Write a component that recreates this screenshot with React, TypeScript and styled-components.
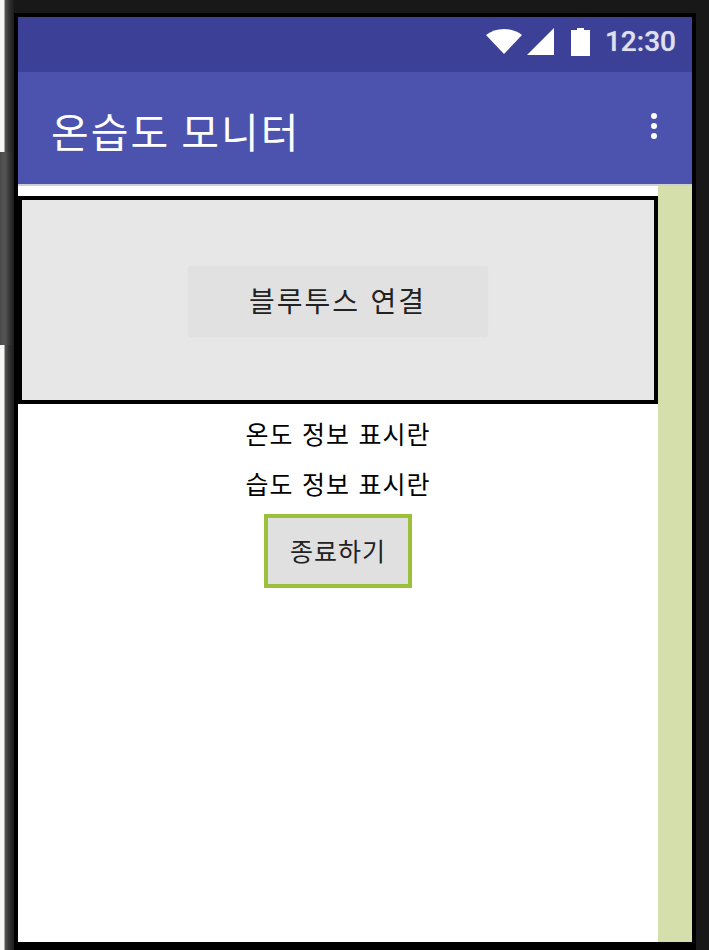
import React from 'react';
import styled, { createGlobalStyle } from 'styled-components';

const GlobalStyle = createGlobalStyle`
  html, body {
    margin: 0;
    padding: 0;
    background: #111;
  }

  body {
    font-family: "Noto Sans CJK KR", "Noto Sans", sans-serif;
  }
`;

const Page = styled.div`
  display: flex;
  width: 709px;
  height: 950px;
  overflow: hidden;
`;

const SideEdge = styled.div`
  display: flex;
  flex-direction: column;
  width: 14px;
  flex: none;
`;

const EdgeSegment = styled.div<{ $h: number; $button?: boolean }>`
  height: ${(p) => p.$h}px;
  flex: ${(p) => (p.$h ? 'none' : 1)};
  background: ${(p) =>
    p.$button
      ? 'linear-gradient(90deg, #4a4a4a 0, #555 5px, #333 10px, #1c1c1c 14px)'
      : 'linear-gradient(90deg, #f6f7f2 0, #f6f7f2 4px, #555 5px, #333 9px, #1c1c1c 14px)'};
`;

const Bezel = styled.div`
  flex: 1;
  display: flex;
  flex-direction: column;
  padding-top: 13px;
  padding-right: 13px;
  background: #181818;
`;

const Screen = styled.div`
  flex: 1;
  display: flex;
  flex-direction: column;
  border: solid #000;
  border-width: 4px 4px 8px;
  background: #fff;
  min-height: 0;
`;

const StatusBar = styled.div`
  height: 55px;
  box-sizing: border-box;
  flex: none;
  display: flex;
  align-items: center;
  justify-content: flex-end;
  padding: 0 16px 6px 0;
  background: #3c4197;
`;

const StatusIcon = styled.svg<{ $gap?: number }>`
  display: block;
  flex: none;
  margin-left: ${(p) => p.$gap ?? 0}px;
  fill: #fff;
`;

const Clock = styled.span`
  margin-left: 15px;
  font-family: Roboto, "Liberation Sans", sans-serif;
  font-size: 28px;
  font-weight: 500;
  line-height: 1;
  color: #dfe0ee;
  text-shadow: 0 0 1px rgba(223, 224, 238, 0.6);
`;

const AppBar = styled.div`
  height: 112px;
  flex: none;
  display: flex;
  align-items: center;
  justify-content: space-between;
  padding: 0 35px 0 33px;
  background: #4b53ae;
  border-bottom: 2px solid #cfcfcf;
`;

const AppTitle = styled.h1`
  margin: 4px 0 0;
  font-size: 41px;
  font-weight: 400;
  line-height: 1;
  letter-spacing: 2px;
  color: #fff;
`;

const MenuDots = styled.div`
  display: flex;
  flex-direction: column;
  gap: 4px;
  margin-top: -4px;
`;

const Dot = styled.span`
  width: 6px;
  height: 6px;
  border-radius: 50%;
  background: #fff;
`;

const Body = styled.div`
  flex: 1;
  display: flex;
  min-height: 0;
`;

const Main = styled.div`
  flex: 1;
  display: flex;
  flex-direction: column;
  align-items: center;
  padding-top: 10px;
  background: #fff;
`;

const Sidebar = styled.div`
  width: 34px;
  flex: none;
  background: #d5dfac;
`;

const ConnectPanel = styled.div`
  align-self: stretch;
  height: 200px;
  margin-bottom: 4px;
  display: flex;
  align-items: center;
  justify-content: center;
  border: 4px solid #000;
  background: #e7e7e7;
`;

const ConnectButton = styled.button`
  width: 300px;
  height: 71px;
  margin: 3px 1px 0 0;
  padding: 0 0 4px;
  border: 0;
  border-radius: 4px;
  background: #e1e1e1;
  box-shadow: 0 0 1px rgba(0, 0, 0, 0.06);
  font-family: inherit;
  font-size: 28px;
  letter-spacing: 2px;
  word-spacing: 2px;
  color: #222;
`;

const InfoLabel = styled.div`
  height: 50px;
  display: flex;
  align-items: center;
  font-size: 25px;
  letter-spacing: 1px;
  word-spacing: 2px;
  color: #000;
`;

const ExitButton = styled.button`
  box-sizing: border-box;
  width: 148px;
  height: 74px;
  margin-top: 6px;
  padding: 0 0 2px;
  border: 4px solid #9bc03c;
  background: #e0e0e0;
  font-family: inherit;
  font-size: 25px;
  letter-spacing: 1px;
  color: #222;
`;

const App = () => (
  <Page>
    <GlobalStyle />
    <SideEdge>
      <EdgeSegment $h={152} />
      <EdgeSegment $h={193} $button />
      <EdgeSegment $h={0} />
    </SideEdge>
    <Bezel>
      <Screen>
        <StatusBar>
          <StatusIcon width="36" height="25" viewBox="0 0 36 25">
            <path d="M18 25 0 6C5 2 11 0 18 0s13 2 18 6z" />
          </StatusIcon>
          <StatusIcon $gap={5} width="27" height="27" viewBox="0 0 27 27">
            <path d="M27 0v27H0z" />
          </StatusIcon>
          <StatusIcon $gap={17} width="19" height="28" viewBox="0 0 19 28">
            <path d="M6 2V0h7v2h6v26H0V2z" />
          </StatusIcon>
          <Clock>12:30</Clock>
        </StatusBar>
        <AppBar>
          <AppTitle>온습도 모니터</AppTitle>
          <MenuDots>
            <Dot />
            <Dot />
            <Dot />
          </MenuDots>
        </AppBar>
        <Body>
          <Main>
            <ConnectPanel>
              <ConnectButton>블루투스 연결</ConnectButton>
            </ConnectPanel>
            <InfoLabel>온도 정보 표시란</InfoLabel>
            <InfoLabel>습도 정보 표시란</InfoLabel>
            <ExitButton>종료하기</ExitButton>
          </Main>
          <Sidebar />
        </Body>
      </Screen>
    </Bezel>
  </Page>
);

export default App;
